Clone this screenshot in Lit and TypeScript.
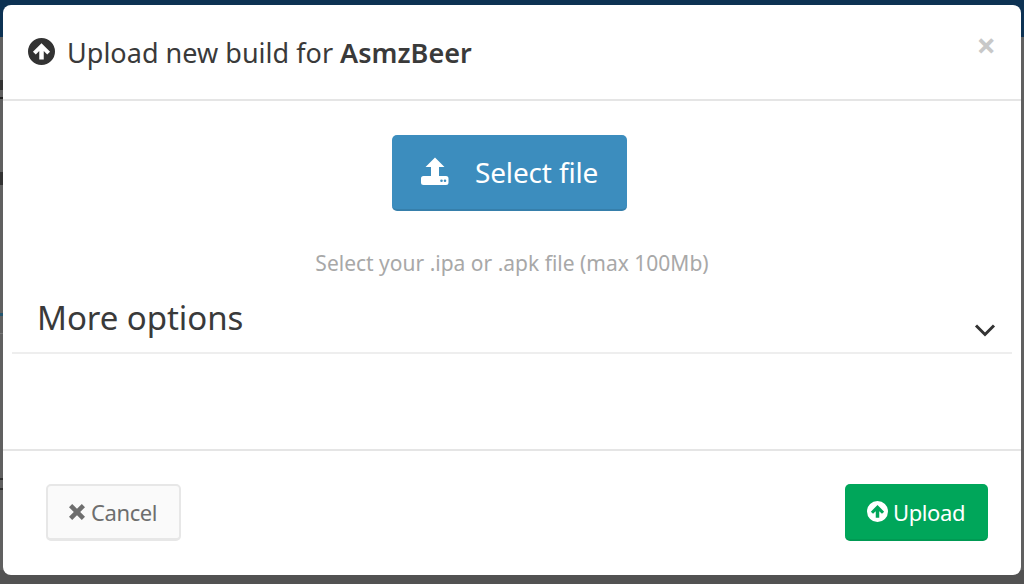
import { LitElement, html, css } from "lit";
import { customElement } from "lit/decorators.js";

const upCircle = html`<svg viewBox="0 0 24 24" aria-hidden="true"><path fill="currentColor" fill-rule="evenodd" d="M12 0a12 12 0 1 0 0 24a12 12 0 0 0 0-24zM12 4.6l7.6 7.6l-2.5 2.5l-3.1-3.1v7.6h-4v-7.6l-3.1 3.1l-2.5-2.5z"/></svg>`;

@customElement("app-root")
export class AppRoot extends LitElement {
  static styles = css`
    :host {
      display: block;
      height: 584px;
      box-sizing: border-box;
      padding: 5px 3px 9px;
      overflow: hidden;
      font-family: "Noto Sans", "Open Sans", sans-serif;
      background:
        linear-gradient(
          transparent 80px, #333 80px 90px, transparent 90px 97px, #222 97px 99px, transparent 99px 172px,
          #333 172px 185px, transparent 185px 313px, #24566f 313px 316px, transparent 316px 333px,
          #777 333px 334px, transparent 334px 478px, #333 478px 480px, transparent 480px 488px,
          #333 488px 490px, transparent 490px
        ) left top / 3px 100% no-repeat,
        linear-gradient(#0d3253 0 37px, #606060 37px 570px, #525252 570px 100%);
    }
    .modal {
      height: 570px;
      background: #fff;
      border-radius: 8px;
      display: flex;
      flex-direction: column;
      color: #333;
    }
    .head {
      height: 96px;
      flex: none;
      box-sizing: border-box;
      border-bottom: 2px solid #e5e5e5;
      display: flex;
      align-items: center;
      padding: 0 26px 0 25px;
    }
    .head svg { width: 27px; height: 27px; flex: none; color: #333; margin: -2px 12px 0 0; }
    .title { flex: 1; font-size: 27px; letter-spacing: 0.02px; color: #3a3a3a; }
    .title b { font-weight: 600; }
    .close { font-size: 34px; font-weight: 700; color: #c8c8c8; line-height: 1; margin: -14px -1px 0 0; }
    .body {
      flex: 1;
      padding: 0 9px;
      display: flex;
      flex-direction: column;
      align-items: stretch;
    }
    .select-wrap { display: flex; justify-content: center; padding: 34px 5px 0 0; }
    .select {
      width: 235px;
      height: 76px;
      box-sizing: border-box;
      background: #3c8dbe;
      border-bottom: 2px solid #367fab;
      border-radius: 5px;
      color: #fff;
      display: flex;
      align-items: center;
      padding-left: 28px;
      gap: 25px;
      font-size: 28px;
      letter-spacing: -0.15px;
    }
    .select svg { width: 30px; height: 30px; flex: none; }
    .hint { text-align: center; color: #a8a8a8; font-size: 21px; margin-top: 37px; line-height: 30px; }
    .more {
      margin-top: 7px;
      height: 69px;
      box-sizing: border-box;
      border-bottom: 2px solid #eee;
      display: flex;
      justify-content: space-between;
      align-items: center;
      padding: 0 16px 0 25px;
      font-size: 33px;
      color: #3a3a3a;
    }
    .more span { margin-top: -2px; letter-spacing: -0.05px; }
    .more svg { width: 22px; height: 14px; margin-top: 22px; color: #333; }
    .foot {
      height: 126px;
      flex: none;
      box-sizing: border-box;
      border-top: 2px solid #e5e5e5;
      padding: 33px 33px 0 43px;
      display: flex;
      justify-content: space-between;
      align-items: flex-start;
    }
    .btn {
      height: 57px;
      box-sizing: border-box;
      border-radius: 5px;
      display: flex;
      align-items: center;
      font-size: 22px;
      letter-spacing: -0.4px;
    }
    .cancel {
      width: 135px;
      background: #fafafa;
      border: 2px solid #e7e7e7;
      border-bottom-width: 3px;
      color: #6e6e6e;
      padding-left: 20px;
      gap: 5px;
    }
    .cancel svg { width: 18px; height: 18px; flex: none; }
    .upload {
      width: 143px;
      background: #00a65a;
      border-bottom: 2px solid #009a53;
      color: #fff;
      padding-left: 22px;
      gap: 5px;
    }
    .upload svg { width: 21px; height: 21px; flex: none; }
  `;

  render() {
    return html`
      <div class="modal">
        <div class="head">
          ${upCircle}
          <div class="title">Upload new build for <b>AsmzBeer</b></div>
          <div class="close">×</div>
        </div>
        <div class="body">
          <div class="select-wrap">
            <div class="select">
              <svg viewBox="0 0 30 30" aria-hidden="true"><path fill="#fff" fill-rule="evenodd" d="M15 0.500l9.500 9.500H19v9h7a2.500 2.500 0 0 1 2.500 2.500v4a2.500 2.500 0 0 1-2.500 2.500H3.500A2.500 2.500 0 0 1 1 25.500v-4A2.500 2.500 0 0 1 3.500 19H11V10H5.500zM21.500 22.500a1.300 1.300 0 1 0 0 2.600a1.300 1.300 0 0 0 0-2.600zM25 22.500a1.300 1.300 0 1 0 0 2.600a1.300 1.300 0 0 0 0-2.600z"/></svg>
              <span>Select file</span>
            </div>
          </div>
          <div class="hint">Select your .ipa or .apk file (max 100Mb)</div>
          <div class="more">
            <span>More options</span>
            <svg viewBox="0 0 22 14" aria-hidden="true"><path d="M2 2.500l9 9l9-9" fill="none" stroke="currentColor" stroke-width="3"/></svg>
          </div>
        </div>
        <div class="foot">
          <div class="btn cancel">
            <svg viewBox="0 0 18 18" aria-hidden="true"><path fill="currentColor" d="M4.200 1L9 5.800L13.800 1L17 4.200L12.200 9L17 13.800L13.800 17L9 12.200L4.200 17L1 13.800L5.800 9L1 4.200z"/></svg>
            <span>Cancel</span>
          </div>
          <div class="btn upload">${upCircle}<span>Upload</span></div>
        </div>
      </div>
    `;
  }
}
